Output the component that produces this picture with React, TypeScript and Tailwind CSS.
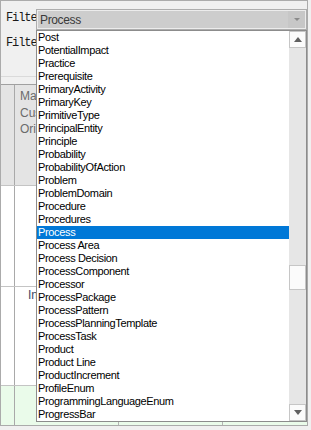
import { useState } from "react";

const ITEMS = [
  "Post",
  "PotentialImpact",
  "Practice",
  "Prerequisite",
  "PrimaryActivity",
  "PrimaryKey",
  "PrimitiveType",
  "PrincipalEntity",
  "Principle",
  "Probability",
  "ProbabilityOfAction",
  "Problem",
  "ProblemDomain",
  "Procedure",
  "Procedures",
  "Process",
  "Process Area",
  "Process Decision",
  "ProcessComponent",
  "Processor",
  "ProcessPackage",
  "ProcessPattern",
  "ProcessPlanningTemplate",
  "ProcessTask",
  "Product",
  "Product Line",
  "ProductIncrement",
  "ProfileEnum",
  "ProgrammingLanguageEnum",
  "ProgressBar",
];

function Arrow({ up }: { up?: boolean }) {
  return (
    <svg width="8" height="5" viewBox="0 0 8 5">
      {up ? <polygon points="0,5 8,5 4,0" fill="currentColor" /> : <polygon points="0,0 8,0 4,5" fill="currentColor" />}
    </svg>
  );
}

function FilterLabel() {
  return (
    <div className="w-[30px] shrink-0 overflow-hidden whitespace-nowrap font-['Liberation_Mono',monospace] text-[12px] tracking-[-1.1px] text-[#1a1a1a] -mt-[3px]">
      Filter:
    </div>
  );
}

export default function App() {
  const [selected, setSelected] = useState("Process");

  return (
    <div className="relative w-[311px] h-[430px] bg-[#f0f0f0] overflow-hidden font-['Liberation_Sans',Arial,sans-serif]">
      <div className="flex flex-col w-[308px] h-[426px] border border-[#ababab]">
        {/* filter area */}
        <div className="h-[75px] shrink-0 flex flex-col pl-[5px] pt-[8px] gap-[4px]">
          <div className="flex items-center h-[21px]">
            <FilterLabel />
            <div className="flex-1 h-[21px] border border-[#adadad] bg-[#cdcdcd] shadow-[inset_0_0_0_1px_#ececec] flex items-center">
              <span className="flex-1 pl-[3px] text-[12px] tracking-[-0.35px] text-[#3a3a3a]">{selected}</span>
              <span className="w-[17px] h-[17px] mr-[1px] bg-[#c7c7c7] flex items-center justify-center text-[#8a8a8a]">
                <svg width="6" height="3" viewBox="0 0 6 3">
                  <polygon points="0,0 6,0 3,3" fill="currentColor" />
                </svg>
              </span>
            </div>
          </div>
          <div className="flex items-center h-[21px]">
            <FilterLabel />
            <div className="flex-1 h-[21px] border border-[#adadad] bg-white" />
          </div>
        </div>
        <div className="h-px shrink-0 bg-[#dadada]" />
        <div className="h-[7px] shrink-0" />

        {/* grid behind the popup */}
        <div className="flex-1 flex flex-col border-t border-[#a0a0a0] text-[12px]">
          <div className="h-[101px] shrink-0 flex bg-[#e4e4e4] border-b border-[#c4c4c4]">
            <div className="w-[14px] shrink-0 border-r border-[#a9a9a9]" />
            <div className="w-[22px] shrink-0 overflow-hidden pl-[5px] pt-[3px] leading-[16.5px] text-[#6b6b6b] whitespace-nowrap">
              <div>Maturity</div>
              <div>Customer</div>
              <div>Origin</div>
            </div>
            <div className="flex-1" />
          </div>
          <div className="h-[101px] shrink-0 flex bg-white border-b border-[#c4c4c4]">
            <div className="w-[14px] shrink-0 border-r border-[#a9a9a9]" />
            <div className="flex-1" />
          </div>
          <div className="h-[99px] shrink-0 flex bg-white border-b border-[#c4c4c4]">
            <div className="w-[14px] shrink-0 border-r border-[#a9a9a9]" />
            <div className="w-[22px] shrink-0 overflow-hidden pl-[13px] leading-[16px] text-[#3d4a66] whitespace-nowrap">
              In Progress
            </div>
            <div className="flex-1" />
          </div>
          <div className="flex-1 flex bg-[#eafbea]">
            <div className="w-[14px] shrink-0 border-r border-[#a9a9a9]" />
            <div className="w-[104px] shrink-0 border-r border-[#b4b4b4]" />
            <div className="w-[104px] shrink-0 border-r border-[#b4b4b4]" />
            <div className="flex-1" />
          </div>
        </div>
      </div>

      {/* dropdown popup */}
      <div className="absolute left-[36px] top-[30px] w-[271px] h-[392px] border border-[#8c8c8c] bg-white flex">
        <ul className="flex-1 flex flex-col text-[11px] tracking-[-0.35px] leading-[13px] text-black">
          {ITEMS.map((item) => {
            const active = item === selected;
            return (
              <li
                key={item}
                onClick={() => setSelected(item)}
                className={`h-[13px] pl-[1px] whitespace-nowrap cursor-default ${
                  active ? "bg-[#0078d7] text-white" : ""
                }`}
              >
                {item}
              </li>
            );
          })}
        </ul>
        <div className="w-[17px] shrink-0 bg-[#e6e6e6] flex flex-col">
          <button
            type="button"
            className="h-[17px] shrink-0 bg-[#fbfbfb] border border-[#c6c6c6] flex items-center justify-center text-[#606060]"
          >
            <Arrow up />
          </button>
          <div className="h-[217px] shrink-0" />
          <div className="h-[25px] shrink-0 bg-[#fbfbfb] border border-[#c6c6c6]" />
          <div className="flex-1" />
          <button
            type="button"
            className="h-[17px] shrink-0 bg-[#fbfbfb] border border-[#c6c6c6] flex items-center justify-center text-[#606060]"
          >
            <Arrow />
          </button>
        </div>
      </div>
    </div>
  );
}
